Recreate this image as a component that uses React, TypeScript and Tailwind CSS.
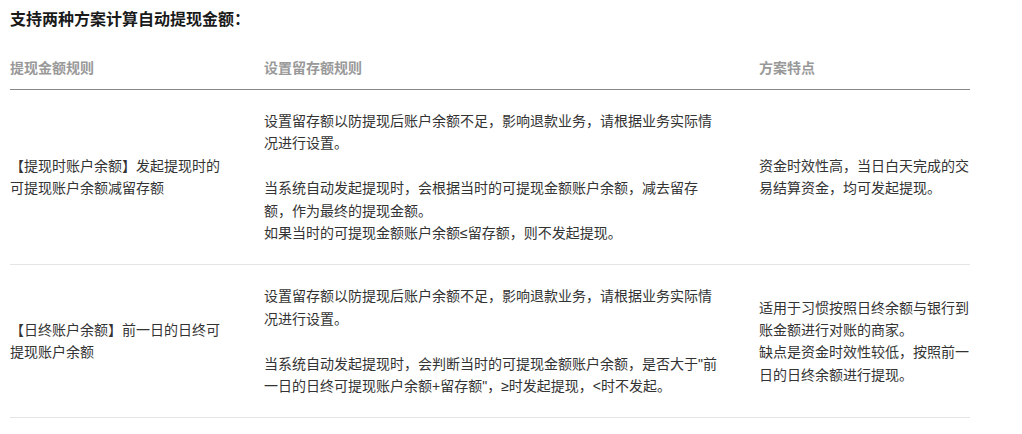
import React from "react";

const font = { fontFamily: '"Liberation Sans", "Noto Sans CJK SC", sans-serif' };

export default function App() {
  return (
    <div className="bg-white w-[1022px] h-[434px] px-[10px] pt-[8px] text-[#333]" style={font}>
      <div className="text-[16px] font-bold leading-[24px] text-[#1a1a1a] mb-[15px]">支持两种方案计算自动提现金额：</div>
      <div className="w-[960px]">
        <div className="grid grid-cols-[254px_495px_211px] border-b border-[#888] text-[14px] font-bold text-[#999] leading-[22px] py-[10px]">
          <div className="pr-[40px]">提现金额规则</div>
          <div className="pr-[40px]">设置留存额规则</div>
          <div>方案特点</div>
        </div>
        <div className="grid grid-cols-[254px_495px_211px] border-b border-[#e5e5e5] text-[14px] leading-[22.4px] py-[20px] items-center">
          <div className="pr-[40px]">【提现时账户余额】发起提现时的可提现账户余额减留存额</div>
          <div className="pr-[40px]">
            设置留存额以防提现后账户余额不足，影响退款业务，请根据业务实际情况进行设置。
            <br />
            <br />
            当系统自动发起提现时，会根据当时的可提现金额账户余额，减去留存额，作为最终的提现金额。
            <br />
            如果当时的可提现金额账户余额≤留存额，则不发起提现。
          </div>
          <div>资金时效性高，当日白天完成的交易结算资金，均可发起提现。</div>
        </div>
        <div className="grid grid-cols-[254px_495px_211px] border-b border-[#e5e5e5] text-[14px] leading-[22.4px] py-[20px] items-center">
          <div className="pr-[40px]">【日终账户余额】前一日的日终可提现账户余额</div>
          <div className="pr-[40px]">
            设置留存额以防提现后账户余额不足，影响退款业务，请根据业务实际情况进行设置。
            <br />
            <br />
            当系统自动发起提现时，会判断当时的可提现金额账户余额，是否大于"前一日的日终可提现账户余额+留存额"，≥时发起提现，&lt;时不发起。
          </div>
          <div>
            适用于习惯按照日终余额与银行到账金额进行对账的商家。
            <br />
            缺点是资金时效性较低，按照前一日的日终余额进行提现。
          </div>
        </div>
      </div>
    </div>
  );
}
